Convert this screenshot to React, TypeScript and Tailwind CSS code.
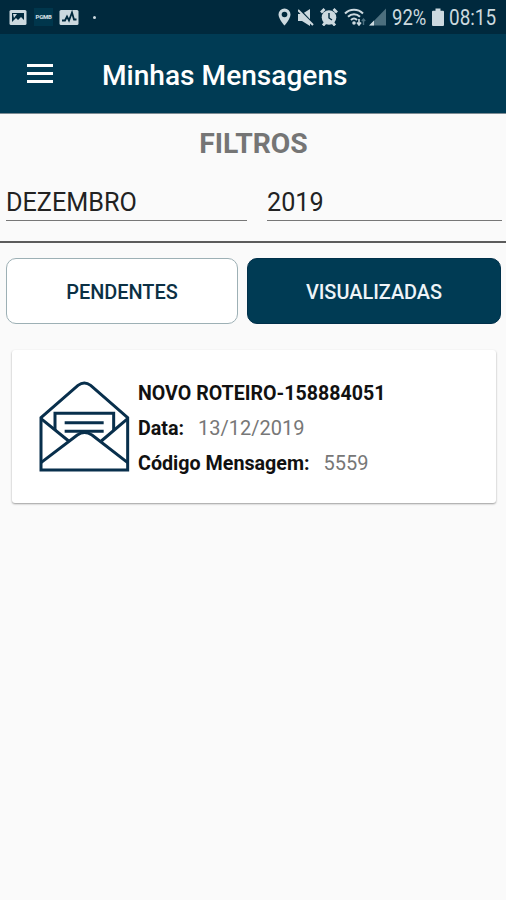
import type { ReactNode } from "react";

type FilterFieldProps = {
  value: string;
  className?: string;
};

type TabButtonProps = {
  children: ReactNode;
  className?: string;
};

function StatusBar() {
  return (
    <div className="flex h-[34px] items-center justify-between bg-[#00293d] text-[#ccd9df]">
      <div className="flex items-center">
        <svg className="ml-[9px] h-[17px] w-[18px]" viewBox="0 0 18 17">
          <rect x="0.5" y="1" width="17" height="15" rx="1.5" fill="currentColor" />
          <path d="M3 4h12v7l-3-3-3 3-2-2-4 4z" fill="#00293d" />
          <path d="M4 5h4l-3 4z" fill="currentColor" />
        </svg>
        <div className="ml-[7px] flex h-[18px] w-[19px] items-center justify-center bg-[#00364c] text-[6px] font-black leading-none tracking-[-0.3px]">
          PGMB
        </div>
        <svg className="ml-[6px] h-[17px] w-[20px]" viewBox="0 0 20 17">
          <rect x="0.5" y="1" width="19" height="15" rx="1.5" fill="currentColor" />
          <path
            d="M3 11.5h3l2-4 2 4 3-8 2 7h2.5"
            fill="none"
            stroke="#00293d"
            strokeWidth="1.8"
          />
        </svg>
        <span className="ml-[14px] h-[3px] w-[3px] rounded-full bg-current" />
      </div>

      <div className="flex items-center">
        <svg className="h-[18px] w-[13px]" viewBox="0 0 13 18">
          <path
            d="M6.5 0.5A6 6 0 0 0 0.5 6.5C0.5 11 6.5 17.5 6.5 17.5S12.5 11 12.5 6.5A6 6 0 0 0 6.5 0.5z"
            fill="currentColor"
          />
          <circle cx="6.5" cy="6.5" r="2.8" fill="#00293d" />
        </svg>
        <svg className="ml-[7px] h-[17px] w-[16px]" viewBox="0 0 16 17">
          <path d="M0 5h4l8-5v17l-8-5H0z" fill="currentColor" />
          <path d="M1.5 0.5l15 16" stroke="#00293d" strokeWidth="2" />
          <path d="M0 1l15 15" stroke="currentColor" strokeWidth="2" />
        </svg>
        <svg className="ml-[6px] h-[18px] w-[18px]" viewBox="0 0 18 18">
          <circle cx="9" cy="9.5" r="7.3" fill="currentColor" />
          <path
            d="M1 4.5L4.5 1M17 4.5L13.5 1M3 17.5l2.5-3M15 17.5l-2.5-3"
            stroke="currentColor"
            strokeWidth="2.8"
          />
          <path d="M9 5v5l3 2" fill="none" stroke="#00293d" strokeWidth="1.4" />
        </svg>
        <svg className="ml-[6px] h-[18px] w-[22px]" viewBox="0 0 22 18">
          <g fill="none" stroke="currentColor" strokeWidth="2">
            <path d="M1 5.5C6 0.5 14 0.5 19 5.5" />
            <path d="M4 8.8C7.5 5.3 12.5 5.3 16 8.8" />
            <path d="M7 12C8.8 10.2 11.2 10.2 13 12" />
          </g>
          <circle cx="10" cy="15" r="1.8" fill="currentColor" />
          <path d="M15 11v6M13 14.5l2 2.5 2-2.5" fill="none" stroke="currentColor" strokeWidth="1.6" />
          <path d="M19.5 17v-6M17.8 13l1.7-2 1.7 2" fill="none" stroke="#4a7080" strokeWidth="1.4" />
        </svg>
        <svg className="ml-[3px] h-[18px] w-[18px]" viewBox="0 0 18 18">
          <path d="M17 0.5V17.5H0.5z" fill="#4c6f7e" />
          <path d="M5 12.5v5H0z" fill="currentColor" />
        </svg>
        <span className="ml-[5px] mt-[2px] w-[36px] whitespace-nowrap">
          <span className="inline-block origin-left scale-x-[0.84] text-[22px] leading-[34px]">
            92%
          </span>
        </span>
        <svg className="ml-[4px] h-[18px] w-[12px]" viewBox="0 0 12 18">
          <path
            d="M3.5 0.5h5v2.2H11a1 1 0 0 1 1 1V17a1 1 0 0 1-1 1H1a1 1 0 0 1-1-1V3.7a1 1 0 0 1 1-1h2.5z"
            fill="currentColor"
          />
        </svg>
        <span className="ml-[5px] mt-[2px] w-[57px] whitespace-nowrap">
          <span className="inline-block origin-left scale-x-[0.86] text-[22px] leading-[34px]">
            08:15
          </span>
        </span>
      </div>
    </div>
  );
}

function Toolbar() {
  return (
    <header className="flex h-[80px] items-center border-b border-[#7d8c94] bg-[#003b54]">
      <button type="button" aria-label="Menu" className="ml-[27px] flex w-[26px] flex-col gap-[5px]">
        <span className="h-[3px] bg-white" />
        <span className="h-[3px] bg-white" />
        <span className="h-[3px] bg-white" />
      </button>
      <h1 className="ml-[49px] mt-[6px] whitespace-nowrap text-[28.1px] font-medium text-white">
        Minhas Mensagens
      </h1>
    </header>
  );
}

function FilterField({ value, className = "" }: FilterFieldProps) {
  return (
    <div className={`h-[38px] border-b border-[#777] text-[25.2px] leading-[40px] text-[#222] ${className}`}>
      {value}
    </div>
  );
}

function TabButton({ children, className = "" }: TabButtonProps) {
  return (
    <button
      type="button"
      className={`flex h-[66px] items-center justify-center rounded-[10px] border pt-[4px] text-[19.9px] font-medium ${className}`}
    >
      {children}
    </button>
  );
}

function EnvelopeIcon() {
  return (
    <svg className="h-[91px] w-[91px] shrink-0" viewBox="59 33 273 273">
      <g fill="none" stroke="#082f4c" strokeWidth="9">
        <path d="M65 143L176 46Q195 32 214 46L325 143V300H65z" />
        <path d="M107 180V130H283V180" />
        <path d="M136 158H253M136 184H253" />
        <path d="M65 146L148 213M325 146L246 213" />
        <path d="M65 278L174 195Q195 180 218 195L325 278" />
      </g>
    </svg>
  );
}

function MessageCard() {
  return (
    <article className="ml-[12px] mr-[10px] mt-[26px] flex h-[153px] rounded-[3px] bg-white pl-[27px] shadow-[0_1px_2px_rgba(0,0,0,0.38)]">
      <div className="pt-[31px]">
        <EnvelopeIcon />
      </div>
      <div className="ml-[8px] whitespace-nowrap pt-[26px] text-[20px] leading-[35px] text-[#777]">
        <p className="text-[19.6px] font-bold text-[#111]">NOVO ROTEIRO-158884051</p>
        <p>
          <span className="mr-[14px] text-[19.7px] font-bold text-[#111]">Data:</span>
          13/12/2019
        </p>
        <p>
          <span className="mr-[14px] text-[19.7px] font-bold text-[#111]">Código Mensagem:</span>
          5559
        </p>
      </div>
    </article>
  );
}

function App() {
  return (
    <main className="h-[900px] w-[506px] overflow-hidden bg-[#fafafa] font-['Roboto',sans-serif]">
      <StatusBar />
      <Toolbar />

      <section className="h-[129px] border-b-2 border-[#5c5c5c]">
        <h2 className="pl-px pt-[9px] text-center text-[28.3px] font-bold leading-[42px] text-[#757575]">
          FILTROS
        </h2>
        <div className="mt-[18px] flex">
          <FilterField value="DEZEMBRO" className="ml-[6px] w-[241px]" />
          <FilterField value="2019" className="ml-[20px] w-[235px]" />
        </div>
      </section>

      <div className="flex pt-[15px]">
        <TabButton className="ml-[6px] w-[232px] border-[#9db0b5] bg-white text-[#0b3044]">
          PENDENTES
        </TabButton>
        <TabButton className="ml-[9px] w-[254px] border-[#00304a] bg-[#003b54] text-[#eef4f8]">
          VISUALIZADAS
        </TabButton>
      </div>

      <MessageCard />
    </main>
  );
}

export default App;
